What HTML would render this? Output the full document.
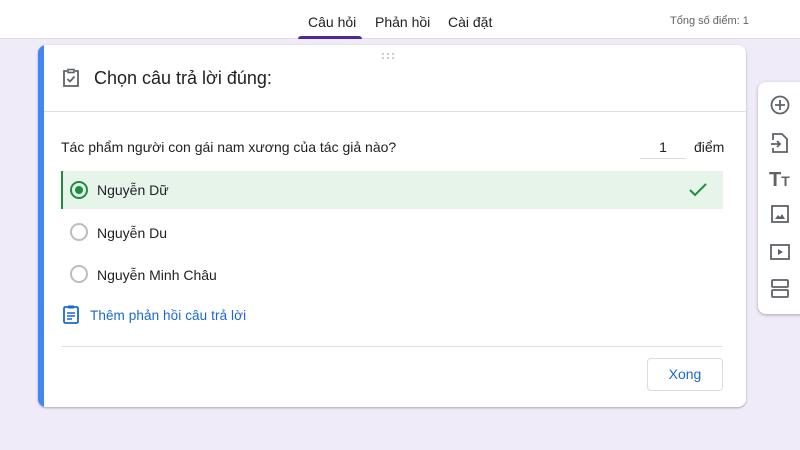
<!DOCTYPE html>
<html><head><meta charset="utf-8"><style>
*{box-sizing:border-box;margin:0;padding:0}
body{width:800px;height:450px;overflow:hidden;background:#f0ebf8;font-family:"Liberation Sans",Arial,sans-serif;position:relative;color:#202124}
.top{position:absolute;left:0;top:0;width:800px;height:39px;background:#fff;border-bottom:1px solid #e0dce8}
.tab{position:absolute;top:14px;font-size:14px;color:#202124}
.ul{position:absolute;left:298px;top:36px;width:64px;height:3px;background:#4e2a94;border-radius:3px 3px 0 0}
.total{position:absolute;left:670px;top:15px;font-size:11px;color:#5f6368}
.card{position:absolute;left:38px;top:45px;width:708px;height:362px;background:#fff;border-radius:8px;box-shadow:0 1px 2px rgba(0,0,0,.3);overflow:hidden}
.bl{position:absolute;left:0;top:0;width:6px;height:100%;background:#4285f4}
.abs{position:absolute}
.opt{position:absolute;font-size:14px;color:#202124}
.radio{position:absolute;width:18px;height:18px;border:2px solid #bdbdbd;border-radius:50%}
.tool{position:absolute;left:758px;top:82px;width:50px;height:232px;background:#fff;border-radius:8px;box-shadow:0 1px 3px rgba(0,0,0,.3)}
</style></head><body>
<div class="top">
<div class="tab" style="left:308px">Câu hỏi</div>
<div class="tab" style="left:375px">Phản hồi</div>
<div class="tab" style="left:448px">Cài đặt</div>
<div class="ul"></div>
<div class="total">Tổng số điểm: 1</div>
</div>
<div class="card">
<div class="bl"></div>
<svg class="abs" style="left:343px;top:7px" width="14" height="8"><g fill="#bbb"><circle cx="2" cy="2" r="1"/><circle cx="7" cy="2" r="1"/><circle cx="12" cy="2" r="1"/><circle cx="2" cy="6" r="1"/><circle cx="7" cy="6" r="1"/><circle cx="12" cy="6" r="1"/></g></svg>
<svg class="abs" style="left:24px;top:23px" width="18" height="20" viewBox="0 0 18 20"><path d="M5 3H2v15h14V3h-3" fill="none" stroke="#5f6368" stroke-width="1.8"/><rect x="6" y="1.5" width="6" height="3" fill="none" stroke="#5f6368" stroke-width="1.6"/><path d="M5.5 11l2.5 2.5 4.5-5" fill="none" stroke="#5f6368" stroke-width="1.8"/></svg>
<div class="abs" style="left:56px;top:23px;font-size:18px;color:#202124">Chọn câu trả lời đúng:</div>
<div class="abs" style="left:6px;top:66px;width:702px;height:1px;background:#e0e0e0"></div>
<div class="abs" style="left:23px;top:94px;font-size:14px">Tác phẩm người con gái nam xương của tác giả nào?</div>
<div class="abs" style="left:602px;top:94px;width:46px;height:20px;border-bottom:1px solid #dadce0;text-align:center;font-size:14px">1</div>
<div class="abs" style="left:656px;top:94px;font-size:14px">điểm</div>
<div class="abs" style="left:23px;top:126px;width:662px;height:38px;background:#e6f4ea;border-left:2px solid #1e8e3e"></div>
<div class="radio" style="left:32px;top:136px;border-color:#1e8e3e"><div style="position:absolute;left:3px;top:3px;width:8px;height:8px;border-radius:50%;background:#1e8e3e"></div></div>
<div class="opt" style="left:59px;top:137px">Nguyễn Dữ</div>
<svg class="abs" style="left:650px;top:136px" width="20" height="18"><path d="M2 9l5 5L18 3" fill="none" stroke="#1e8e3e" stroke-width="2"/></svg>
<div class="radio" style="left:32px;top:178px"></div>
<div class="opt" style="left:59px;top:180px">Nguyễn Du</div>
<div class="radio" style="left:32px;top:220px"></div>
<div class="opt" style="left:59px;top:222px">Nguyễn Minh Châu</div>
<svg class="abs" style="left:24px;top:259px" width="18" height="20" viewBox="0 0 18 20"><rect x="2" y="3" width="14" height="16" rx="1.5" fill="none" stroke="#1967d2" stroke-width="1.8"/><rect x="6" y="1.5" width="6" height="3" fill="#1967d2"/><path d="M5 9h8M5 12h8M5 15h5" stroke="#1967d2" stroke-width="1.6"/></svg>
<div class="abs" style="left:52px;top:263px;font-size:13.5px;color:#1967d2;letter-spacing:.1px">Thêm phản hồi câu trả lời</div>
<div class="abs" style="left:23px;top:301px;width:662px;height:1px;background:#e0e0e0"></div>
<div class="abs" style="left:609px;top:313px;width:76px;height:33px;border:1px solid #dadce0;border-radius:4px;text-align:center;line-height:31px;font-size:14px;color:#1967d2">Xong</div>
</div>
<div class="tool">
<svg class="abs" style="left:11px;top:12px" width="22" height="22"><circle cx="11" cy="11" r="8.5" fill="none" stroke="#5f6368" stroke-width="1.8"/><path d="M11 6v10M6 11h10" stroke="#5f6368" stroke-width="1.8"/></svg>
<svg class="abs" style="left:12px;top:50px" width="20" height="22"><path d="M3 8V2h9l5 5v13H3v-4" fill="none" stroke="#5f6368" stroke-width="1.8"/><path d="M1 12h9M7 9l3 3-3 3" fill="none" stroke="#5f6368" stroke-width="1.8"/></svg>
<div class="abs" style="left:11px;top:87px;font-size:20px;font-weight:bold;color:#5f6368">T<span style="font-size:14px">T</span></div>
<svg class="abs" style="left:12px;top:122px" width="20" height="20"><rect x="2" y="2" width="16" height="16" fill="none" stroke="#5f6368" stroke-width="1.8"/><path d="M5 15l3-4 2 2 2-3 3 5z" fill="#5f6368"/></svg>
<svg class="abs" style="left:11px;top:160px" width="22" height="20"><rect x="2" y="3" width="18" height="14" fill="none" stroke="#5f6368" stroke-width="1.8"/><path d="M9 7v6l5-3z" fill="#5f6368"/></svg>
<svg class="abs" style="left:12px;top:196px" width="20" height="22"><rect x="2" y="2" width="16" height="7" rx="1" fill="none" stroke="#5f6368" stroke-width="1.8"/><rect x="2" y="12" width="16" height="7" rx="1" fill="none" stroke="#5f6368" stroke-width="1.8"/></svg>
</div>
</body></html>
